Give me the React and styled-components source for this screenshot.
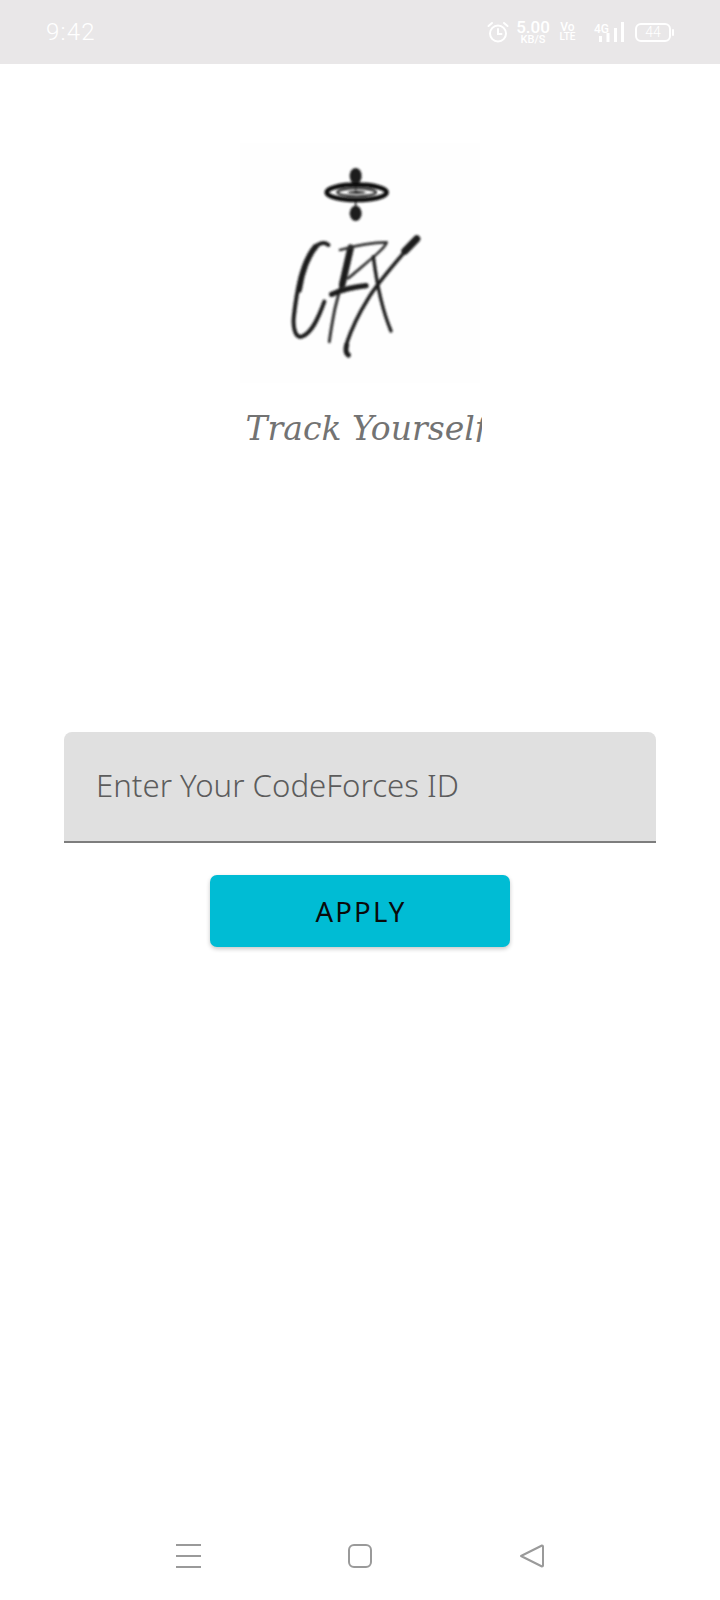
import React from "react";
import styled, { createGlobalStyle } from "styled-components";

const Global = createGlobalStyle`
  html, body { margin: 0; padding: 0; background: #fff; }
  * { box-sizing: border-box; }
`;

const Page = styled.div`
  width: 720px;
  height: 1600px;
  display: flex;
  flex-direction: column;
  background: #fff;
  overflow: hidden;
  font-family: Roboto, "Noto Sans", sans-serif;
`;

const StatusBar = styled.header`
  height: 64px;
  flex: none;
  background: #e9e7e8;
  color: #fff;
  display: flex;
  align-items: center;
  justify-content: space-between;
  padding: 0 49px 0 46px;
`;

const Clock = styled.span`
  font-size: 24px;
  font-weight: 300;
  letter-spacing: 1.2px;
`;

const StatusGroup = styled.div`
  display: flex;
  align-items: center;
  height: 40px;
`;

const Stack = styled.div`
  display: flex;
  flex-direction: column;
  align-items: center;
  font-weight: 500;
  margin-left: ${(p) => p.$gap}px;
  width: ${(p) => p.$width}px;
`;

const StackTop = styled.span`
  font-size: ${(p) => p.$size}px;
  line-height: ${(p) => p.$size - 3}px;
`;

const StackBottom = styled.span`
  font-size: ${(p) => p.$size}px;
  line-height: ${(p) => p.$size}px;
`;

const Net = styled.span`
  font-size: 12px;
  font-weight: 500;
  margin-left: 19px;
  width: 14px;
  align-self: flex-start;
  margin-top: 10px;
`;

const Battery = styled.div`
  width: 36px;
  height: 19px;
  margin-left: 11px;
  border: 2px solid #fff;
  border-radius: 6px;
  font-size: 14px;
  font-weight: 300;
  line-height: 15px;
  text-align: center;
  position: relative;
  &::after {
    content: "";
    position: absolute;
    right: -5px;
    top: 4px;
    width: 2px;
    height: 7px;
    background: #fff;
    border-radius: 1px;
  }
`;

const Main = styled.main`
  flex: 1;
  display: flex;
  flex-direction: column;
  align-items: center;
  padding: 0 64px;
`;

const LogoBox = styled.div`
  width: 240px;
  height: 240px;
  margin-top: 79px;
  background: #fefefe;
  flex: none;
`;

const Tagline = styled.div`
  width: 236px;
  height: 38px;
  margin: 21px 0 0 7px;
  overflow: hidden;
  white-space: nowrap;
  font-family: "DejaVu Serif", serif;
  font-style: italic;
  font-size: 33px;
  line-height: 50px;
  color: #737373;
`;

const Field = styled.div`
  align-self: stretch;
  height: 111px;
  margin-top: 290px;
  padding: 0 32px 3px;
  display: flex;
  align-items: center;
  background: #e0e0e0;
  border-radius: 8px 8px 0 0;
  border-bottom: 2px solid #7d7d7d;
`;

const Placeholder = styled.span`
  font-family: "Noto Sans", sans-serif;
  font-size: 31.2px;
  font-weight: 300;
  color: #5c5c5c;
`;

const ApplyButton = styled.button`
  width: 300px;
  height: 72px;
  margin-top: 32px;
  padding: 0 0 0 2px;
  border: none;
  border-radius: 7px;
  background: #00bcd4;
  color: #0a0a0a;
  font-family: "Noto Sans", sans-serif;
  font-size: 27.5px;
  letter-spacing: 2.2px;
  box-shadow: 0 2px 4px rgba(0, 0, 0, 0.22);
`;

const NavBar = styled.nav`
  height: 57px;
  flex: none;
  display: flex;
  align-items: flex-start;
  justify-content: space-between;
  padding: 0 175px 0 175px;
`;

const NavIcon = styled.svg`
  width: 26px;
  height: 26px;
  fill: none;
  stroke: #9a9a9a;
  stroke-width: 2;
  stroke-linejoin: round;
`;

const AlarmIcon = () => (
  <svg width="24" height="24" viewBox="0 0 24 24" fill="none" stroke="#fff" strokeWidth="2" strokeLinecap="round">
    <circle cx="12" cy="13.5" r="8" />
    <path d="M12 9v5h3.5M2.5 6 6 3M21.5 6 18 3" />
  </svg>
);

const SignalIcon = () => (
  <svg width="28" height="20" viewBox="0 0 28 20" fill="#fff" style={{ marginLeft: -12 }}>
    <rect x="3" y="14" width="3" height="6" />
    <rect x="10.5" y="11" width="3" height="9" />
    <rect x="18" y="6" width="3" height="14" />
    <rect x="25" y="0" width="3" height="20" />
  </svg>
);

const Logo = () => (
  <svg width="240" height="240" viewBox="0 0 240 240" fill="none" strokeLinecap="round" strokeLinejoin="round">
    <defs>
      <filter id="soft" x="-10%" y="-10%" width="120%" height="120%">
        <feGaussianBlur stdDeviation="0.8" />
      </filter>
    </defs>
    <g filter="url(#soft)">
      <g transform="translate(75 17) scale(0.3333)">
        <ellipse cx="122" cy="48" rx="18" ry="24" fill="#1f1f1f" />
        <ellipse cx="122" cy="160" rx="18" ry="23" fill="#1f1f1f" />
        <path d="M122 60V90M122 118V145" stroke="#222" strokeWidth="5" />
        <ellipse cx="125" cy="97" rx="90" ry="23" stroke="#111" strokeWidth="14" />
        <ellipse cx="125" cy="97" rx="58" ry="12" stroke="#333" strokeWidth="7" />
        <ellipse cx="125" cy="97" rx="28" ry="4" fill="#111" />
      </g>
      <g transform="translate(45 82) scale(0.3333)" stroke="#1c1c1c">
        <path d="M130 60C112 45 90 60 70 95C50 130 35 200 27 270C22 310 32 340 50 335C80 325 100 280 118 230" strokeWidth="12" />
        <path d="M92 65C70 90 50 140 42 195" strokeWidth="17" />
        <path d="M197 70C185 120 165 190 150 250C143 285 137 320 133 350" strokeWidth="9" stroke="#333" />
        <path d="M197 68L172 178" strokeWidth="20" />
        <path d="M165 75C210 62 260 52 305 52C300 70 260 100 190 160" strokeWidth="8" stroke="#333" />
        <path d="M140 208C170 195 210 185 243 182" strokeWidth="16" />
        <path d="M375 62C330 115 280 170 250 220C225 260 200 310 185 355C180 375 182 385 190 390" strokeWidth="11" />
        <path d="M395 42L360 78" strokeWidth="22" />
        <path d="M185 360C181 375 183 385 190 390" strokeWidth="15" />
        <path d="M265 95C272 150 285 240 318 318" strokeWidth="10" />
      </g>
    </g>
  </svg>
);

export default function App() {
  return (
    <Page>
      <Global />
      <StatusBar>
        <Clock>9:42</Clock>
        <StatusGroup>
          <AlarmIcon />
          <Stack $gap={5} $width={36}>
            <StackTop $size={17}>5.00</StackTop>
            <StackBottom $size={11}>KB/S</StackBottom>
          </Stack>
          <Stack $gap={9} $width={15}>
            <StackTop $size={12}>Vo</StackTop>
            <StackBottom $size={10}>LTE</StackBottom>
          </Stack>
          <Net>4G</Net>
          <SignalIcon />
          <Battery>44</Battery>
        </StatusGroup>
      </StatusBar>
      <Main>
        <LogoBox>
          <Logo />
        </LogoBox>
        <Tagline>Track Yourself</Tagline>
        <Field>
          <Placeholder>Enter Your CodeForces ID</Placeholder>
        </Field>
        <ApplyButton>APPLY</ApplyButton>
      </Main>
      <NavBar>
        <NavIcon viewBox="0 0 26 26">
          <path d="M1 2h25M1 13h25M1 24h25" />
        </NavIcon>
        <NavIcon viewBox="0 0 26 26">
          <rect x="2" y="2" width="22" height="22" rx="5" />
        </NavIcon>
        <NavIcon viewBox="0 0 26 26">
          <path d="M2 13 23 2.5a1 1 0 0 1 1 1v19a1 1 0 0 1-1 1Z" />
        </NavIcon>
      </NavBar>
    </Page>
  );
}
